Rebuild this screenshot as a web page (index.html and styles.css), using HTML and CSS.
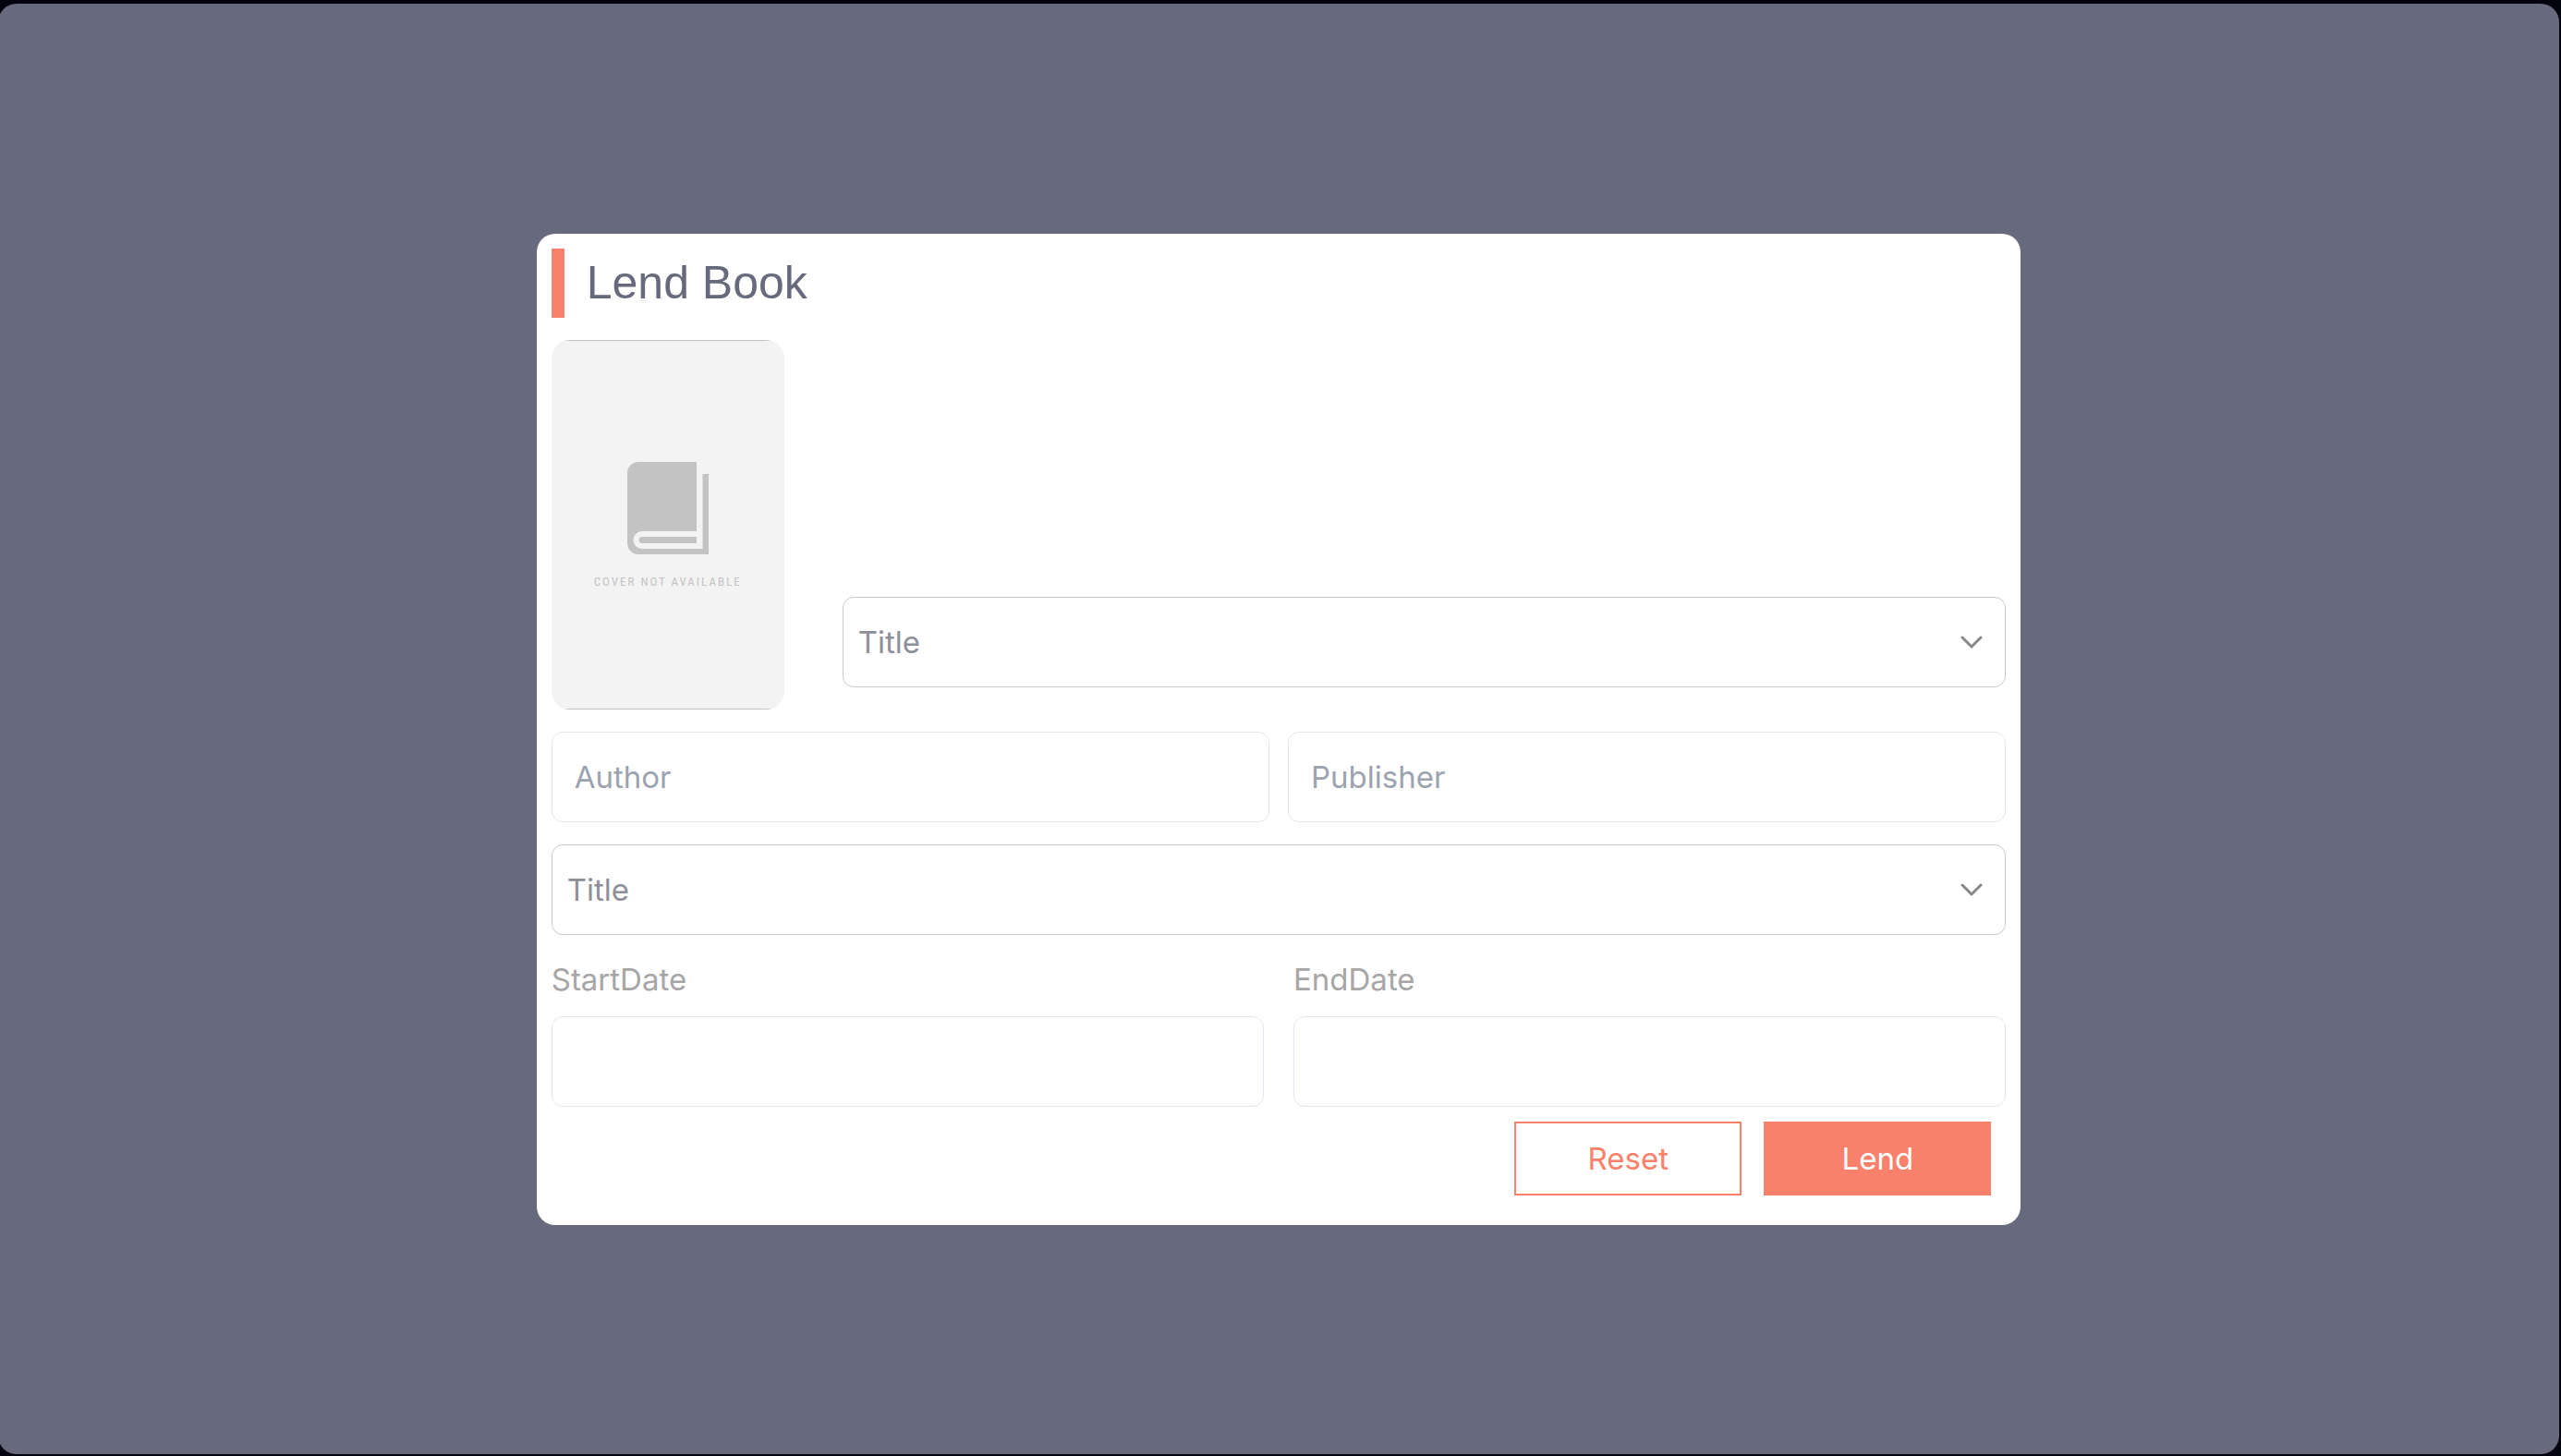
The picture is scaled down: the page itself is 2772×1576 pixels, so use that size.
FILE: index.html
```html
<!DOCTYPE html>
<html lang="en">
<head>
  <meta charset="utf-8">
  <meta name="viewport" content="width=device-width, initial-scale=1">
  <title>Lend Book</title>
  <link rel="stylesheet" href="styles.css">
</head>
<body>
  <main class="backdrop">
    <form class="card">
      <header class="card-header">
        <h1 class="card-title">Lend Book</h1>
      </header>

      <div class="book-row">
        <figure class="cover">
          <svg class="cover-icon" viewBox="0 0 88 100" aria-hidden="true">
            <path d="M12 0H75V75H16A9.500 9.500 0 0 0 16 94H81.500V13H88V100H12A12 12 0 0 1 0 88V12A12 12 0 0 1 12 0Z"/>
            <path d="M16 81H75V88H16A3.500 3.500 0 0 1 16 81Z"/>
          </svg>
          <figcaption class="cover-caption">COVER NOT AVAILABLE</figcaption>
        </figure>
        <div class="select-wrap">
          <select class="field select" aria-label="Book title">
            <option>Title</option>
          </select>
          <svg class="chevron" viewBox="0 0 24 14" aria-hidden="true"><path d="M2 2L12 12L22 2"/></svg>
        </div>
      </div>

      <div class="pair">
        <input class="field" type="text" placeholder="Author" aria-label="Author">
        <input class="field" type="text" placeholder="Publisher" aria-label="Publisher">
      </div>

      <div class="select-wrap">
        <select class="field select" aria-label="Title">
          <option>Title</option>
        </select>
        <svg class="chevron" viewBox="0 0 24 14" aria-hidden="true"><path d="M2 2L12 12L22 2"/></svg>
      </div>

      <div class="pair pair-dates">
        <div class="date">
          <label class="date-label" for="start-date">StartDate</label>
          <input class="field" type="text" id="start-date">
        </div>
        <div class="date">
          <label class="date-label" for="end-date">EndDate</label>
          <input class="field" type="text" id="end-date">
        </div>
      </div>

      <div class="actions">
        <button class="button" type="reset">Reset</button>
        <button class="button button-primary" type="submit">Lend</button>
      </div>
    </form>
  </main>
</body>
</html>
```
FILE: styles.css
```css
* {
  box-sizing: border-box;
}

body {
  margin: 0;
  min-height: 100vh;
  padding: 4px 2px 2px 0;
  display: flex;
  overflow-x: hidden;
  background: #03030f;
  color: #67697c;
  font-family: Inter, "Open Sans", sans-serif;
  font-size: 33px;
}

.backdrop {
  flex: 1;
  margin-left: -2px;
  padding: 1px 1px 0;
  display: flex;
  align-items: center;
  justify-content: center;
  background: #67697c;
  border-radius: 20px;
}

.card {
  width: 58%;
  padding: 16px 16px 32px;
  display: flex;
  flex-direction: column;
  gap: 24px;
  background: #fff;
  border-radius: 20px;
}

.card-header {
  border-left: 14px solid #f9806a;
  padding-left: 24px;
}

.card-title {
  margin: 0;
  font-family: "Liberation Sans", Arial, sans-serif;
  font-size: 50px;
  font-weight: 400;
  line-height: 75px;
}

.book-row {
  display: flex;
  align-items: flex-end;
  gap: 63px;
}

.book-row .select-wrap {
  flex: 1;
  margin-bottom: 24px;
}

.cover {
  width: 252px;
  height: 400px;
  margin: 0;
  padding-top: 132px;
  display: flex;
  flex-direction: column;
  align-items: center;
  gap: 20px;
  background:
    linear-gradient(#c3c3c3, #c3c3c3) top / 100% 1px no-repeat,
    linear-gradient(#c3c3c3, #c3c3c3) bottom / 100% 1px no-repeat,
    #f3f3f3;
  border-radius: 20px;
}

.cover-icon {
  width: 88px;
  height: 100px;
  fill: #c3c3c3;
}

.cover-caption {
  color: #c3c3c3;
  font-family: "Liberation Sans Narrow", "Roboto Condensed", Roboto, sans-serif;
  font-size: 13px;
  font-weight: 400;
  line-height: 20px;
  letter-spacing: 2px;
  white-space: nowrap;
}

.field {
  display: block;
  width: 100%;
  min-width: 0;
  height: 98px;
  margin: 0;
  padding: 0 24px;
  background: #fff;
  border: 1px solid #e2e8f0;
  border-radius: 12px;
  color: #67697c;
  font: inherit;
}

.field::placeholder {
  color: #9ca3af;
  opacity: 1;
}

.select-wrap {
  position: relative;
}

.select {
  appearance: none;
  padding: 0 64px 0 16px;
  border-color: #c9c9c9;
  color: #8e9099;
}

.chevron {
  position: absolute;
  top: 42px;
  right: 25px;
  width: 24px;
  height: 14px;
  fill: none;
  stroke: #888;
  stroke-width: 3;
  stroke-linecap: round;
  stroke-linejoin: round;
  pointer-events: none;
}

.pair {
  display: grid;
  grid-template-columns: 1fr 1fr;
  gap: 20px;
}

.pair-dates {
  gap: 32px;
}

.date {
  display: flex;
  flex-direction: column;
  gap: 16px;
}

.date-label {
  color: #a6a6a6;
  line-height: 48px;
}

.actions {
  margin: -8px 16px 0 0;
  display: flex;
  justify-content: flex-end;
  gap: 24px;
}

.button {
  width: 246px;
  height: 80px;
  padding: 0;
  background: #fff;
  border: 2px solid #f9806a;
  color: #f9806a;
  font: inherit;
}

.button-primary {
  background: #f9806a;
  color: #fff;
}
```
